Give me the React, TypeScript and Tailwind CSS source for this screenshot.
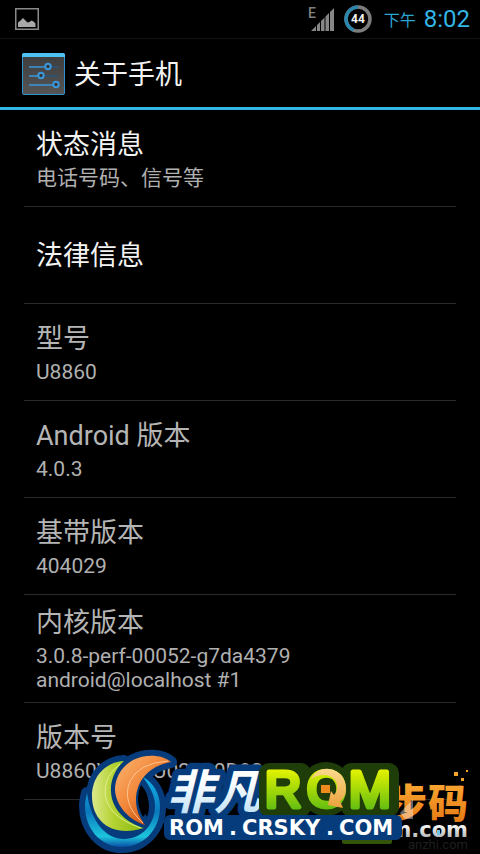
type Item = { title: string; lines: string[]; enabled?: boolean };

const items: Item[] = [
  { title: "状态消息", lines: ["电话号码、信号等"], enabled: true },
  { title: "法律信息", lines: [], enabled: true },
  { title: "型号", lines: ["U8860"] },
  { title: "Android 版本", lines: ["4.0.3"] },
  { title: "基带版本", lines: ["404029"] },
  { title: "内核版本", lines: ["3.0.8-perf-00052-g7da4379", "android@localhost #1"] },
  { title: "版本号", lines: ["U8860V1.1AU02100D92"] },
];

function PictureIcon() {
  return (
    <svg width="24" height="22" viewBox="0 0 24 22" aria-hidden="true">
      <rect x="0.75" y="0.75" width="22.5" height="20.5" fill="none" stroke="#8a8a8a" strokeWidth="1.5" />
      <path d="M3 19v-4.500l2-1.500 3-3 3 3 1.500 1.500 2-.5 2-1.500 2 1 2 2V19z" fill="#a8a8a8" />
    </svg>
  );
}

function SignalIcon() {
  return (
    <svg width="28" height="26" viewBox="0 0 28 26" aria-hidden="true">
      <text x="0" y="12" fontSize="14" fontWeight="500" fill="#808080">E</text>
      <path d="M3 25l5-5v5zM9 25v-6l3-3v9zM13 25V15l3.500-3.500V25zM17.500 25V10.500L21 7v18zM22 25V6l4-4v23z" fill="#868686" />
    </svg>
  );
}

function BatteryRing({ level }: { level: number }) {
  return (
    <svg width="28" height="28" viewBox="0 0 28 28" role="img" aria-label={`${level}%`}>
      <circle cx="14" cy="14" r="12" fill="none" stroke="#7d7d7d" strokeWidth="3.500" />
      <path d="M14 2a12 12 0 0 0-4.500 23.100" fill="none" stroke="#2a86ad" strokeWidth="3.500" />
      <text x="14" y="18" textAnchor="middle" fontSize="12" fontWeight="700" fill="#f4f4f4">{level}</text>
    </svg>
  );
}

function SettingsIcon() {
  return (
    <svg width="44" height="42" viewBox="0 0 44 42" aria-hidden="true">
      <defs>
        <linearGradient id="panel" x1="0" y1="0" x2="0" y2="1">
          <stop offset="0" stopColor="#3c3c3c" />
          <stop offset="1" stopColor="#555" />
        </linearGradient>
      </defs>
      <rect x="0.5" y="0.5" width="42" height="41" rx="1.500" fill="url(#panel)" stroke="#3093cf" />
      <path d="M0 2q0-2 2-2h39q2 0 2 2v2H0z" fill="#4cc3f2" />
      <g fill="none" stroke="#3a97dc" strokeWidth="1.500">
        <path d="M7 14h16M7 23h9M7 32h24" />
        <path d="M29 14h7M22 23h14" stroke="#28567e" />
        <g fill="#353535" strokeWidth="2">
          <circle cx="26" cy="13.500" r="2.700" />
          <circle cx="19" cy="22.500" r="2.700" />
          <circle cx="34" cy="31.500" r="2.700" />
        </g>
      </g>
    </svg>
  );
}

function Row({ title, lines, enabled }: Item) {
  return (
    <li className="flex min-h-[97px] flex-col justify-center border-b border-[#2a2a2a] px-3 pt-3 pb-2.5">
      <h2 className={`text-[27px] leading-8 ${enabled ? "text-[#f3f3f3]" : "text-[#b5b5b5]"}`}>{title}</h2>
      {lines.length > 0 && (
        <div className="mt-[5px] text-[21px] leading-6 text-[#b0b0b0]">
          {lines.map((line) => (
            <p key={line}>{line}</p>
          ))}
        </div>
      )}
    </li>
  );
}

const RING = "M143 777C154 783 160 794 160 807C160 830 143 847 122 847C101 847 85 829 85 806C85 802 86 797 87 793C91 822 106 839 124 839C142 839 155 824 155 806C155 795 150 787 143 777Z";
const GREEN = "M124 761C106 762 92 776 92 796C92 822 113 838 144 828C130 824 112 812 111 792C110 780 116 768 124 761Z";
const ORANGE = "M171 762C162 754 145 754 133 760C121 767 115 778 115 790C116 806 129 820 145 825C139 817 136 809 136 800C136 782 148 766 171 762Z";

function Watermarks() {
  return (
    <svg
      className="pointer-events-none absolute right-0 bottom-0"
      width="410"
      height="112"
      viewBox="70 742 410 112"
      aria-hidden="true"
    >
      <defs>
        <linearGradient id="ring" x1="0" y1="0" x2="0" y2="1">
          <stop offset="0" stopColor="#12b4e8" />
          <stop offset="0.500" stopColor="#0b78bd" />
          <stop offset="0.850" stopColor="#1cc4dc" />
          <stop offset="1" stopColor="#0a4ea5" />
        </linearGradient>
        <linearGradient id="leaf">
          <stop offset="0" stopColor="#dbe98c" />
          <stop offset="0.400" stopColor="#b5d334" />
          <stop offset="1" stopColor="#86b80c" />
        </linearGradient>
        <linearGradient id="flame" x1="0" y1="0" x2="1" y2="1">
          <stop offset="0" stopColor="#fbb874" />
          <stop offset="0.450" stopColor="#f2873a" />
          <stop offset="0.800" stopColor="#c94d0c" />
        </linearGradient>
        <linearGradient id="ice" x1="0" y1="0" x2="0" y2="1">
          <stop offset="0.300" stopColor="#fff" />
          <stop offset="1" stopColor="#b5dcf4" />
        </linearGradient>
        <linearGradient id="lime" gradientUnits="userSpaceOnUse" x1="0" y1="768" x2="0" y2="810">
          <stop offset="0" stopColor="#e9f500" />
          <stop offset="1" stopColor="#62bd12" />
        </linearGradient>
        <linearGradient id="gold" x1="0" y1="0" x2="0" y2="1">
          <stop offset="0" stopColor="#fbd98e" />
          <stop offset="1" stopColor="#e9a13c" />
        </linearGradient>
        <linearGradient id="amber" gradientUnits="userSpaceOnUse" x1="0" y1="784" x2="0" y2="820">
          <stop offset="0" stopColor="#f9a531" />
          <stop offset="1" stopColor="#e67d16" />
        </linearGradient>
        <linearGradient id="silver" gradientUnits="userSpaceOnUse" x1="0" y1="824" x2="0" y2="838">
          <stop offset="0" stopColor="#fff" />
          <stop offset="1" stopColor="#b5b5b5" />
        </linearGradient>
      </defs>

      {/* site mark in the right corner */}
      <text x="468" y="849" textAnchor="end" fontSize="13" fill="#1f1f1f">anzhi.com</text>
      <path d="M342 838h50v4q0 2-2 2h-46q-2 0-2-2z" fill="#34540c" />
      <g fill="url(#amber)" fontSize="40" fontWeight="900">
        <text x="387" y="818">步</text>
        <text x="428" y="818">码</text>
      </g>
      <path d="M400 813l13-14v20h-8z" fill="#fff" opacity="0.400" />
      <g fill="#f6a42c">
        <rect x="454" y="772" width="4" height="4" />
        <rect x="461" y="778" width="3" height="3" />
        <rect x="466" y="770" width="2" height="2" />
      </g>
      <text x="468" y="837" textAnchor="end" fontFamily="DejaVu Sans" fontSize="21" fontWeight="700" fill="url(#silver)">m.com</text>
      <rect x="437" y="830" width="3" height="5" fill="#6fc3ee" />

      {/* globe and wordmark backing */}
      <g fill="#063c7c" stroke="#063c7c" strokeWidth="12" strokeLinejoin="round">
        <path d={RING} />
        <path d={GREEN} />
        <path d={ORANGE} />
        <rect x="170" y="821" width="226" height="13" />
      </g>
      <path d="M141 785q8 8 7 20-1 8-5 12-5-9-5-19 0-7 3-13z" fill="#000" />
      <path d={RING} fill="url(#ring)" />
      <path d={GREEN} fill="url(#leaf)" />
      <path d="M120 764q-15 11-15 28 1 24 36 36" fill="none" stroke="#e2f08c" />
      <path d={ORANGE} fill="url(#flame)" />
      <path d="M168 761q-29 2-38 20-9 22 13 42" fill="none" stroke="#fcc48e" />
      <text
        x="167"
        y="809"
        fontSize="47"
        fontWeight="700"
        fontStyle="italic"
        fill="url(#ice)"
        stroke="#063c7c"
        strokeWidth="13"
        strokeLinejoin="round"
        paintOrder="stroke"
      >
        非凡
      </text>

      <g fill="#1f3d08">
        <rect x="259" y="763" width="52" height="54" rx="10" />
        <circle cx="326" cy="789" r="27" />
        <rect x="341" y="763" width="58" height="54" rx="10" />
      </g>
      <rect x="321" y="785" width="9" height="8" fill="#f08a1c" />
      <g fontFamily="Liberation Sans" fontSize="50" strokeLinejoin="round" fill="url(#lime)" stroke="url(#lime)" strokeWidth="5">
        <text x="265" y="807">R</text>
        <text x="307" y="807">O</text>
        <text x="349" y="807">M</text>
      </g>
      <path d="M311 779C316 770 323 768 329 769C340 770 346 779 346 789C346 795 343 799 340 801L343 808L328 805L331 791L334 795C338 791 338 784 335 780C330 774 320 773 311 779Z" fill="url(#gold)" />

      <rect x="172" y="815" width="228" height="24" rx="5" fill="#063c7c" />
      <g fontFamily="DejaVu Sans" fontSize="21" fontWeight="700" fill="#fff">
        <text x="169" y="835">ROM</text>
        <text x="229" y="835">.</text>
        <text x="242" y="835">CRSKY</text>
        <text x="326" y="835">.</text>
        <text x="339" y="835">COM</text>
      </g>
    </svg>
  );
}

export default function App() {
  return (
    <div className="relative min-h-screen overflow-hidden bg-black font-[Roboto,'Noto_Sans_CJK_SC',sans-serif]">
      <header>
        <div className="flex h-[39px] items-center border-b border-[#121212] pr-[10px] pl-[15px]">
          <PictureIcon />
          <div className="ml-auto flex items-center">
            <SignalIcon />
            <span className="ml-2">
              <BatteryRing level={44} />
            </span>
            <span className="ml-3 pt-1 text-[16px] text-[#2ca5d2]">下午</span>
            <span className="ml-2 text-[24px] leading-8 text-[#33b5e5]">8:02</span>
          </div>
        </div>
        <div className="flex h-[71px] items-center border-b-3 border-[#33b5e5] pt-0.5 pl-[22px]">
          <SettingsIcon />
          <h1 className="ml-2 pt-0.5 text-[27px] text-[#f3f3f3]">关于手机</h1>
        </div>
      </header>
      <ul className="px-6">
        {items.map((item) => (
          <Row key={item.title} {...item} />
        ))}
      </ul>
      <Watermarks />
    </div>
  );
}
